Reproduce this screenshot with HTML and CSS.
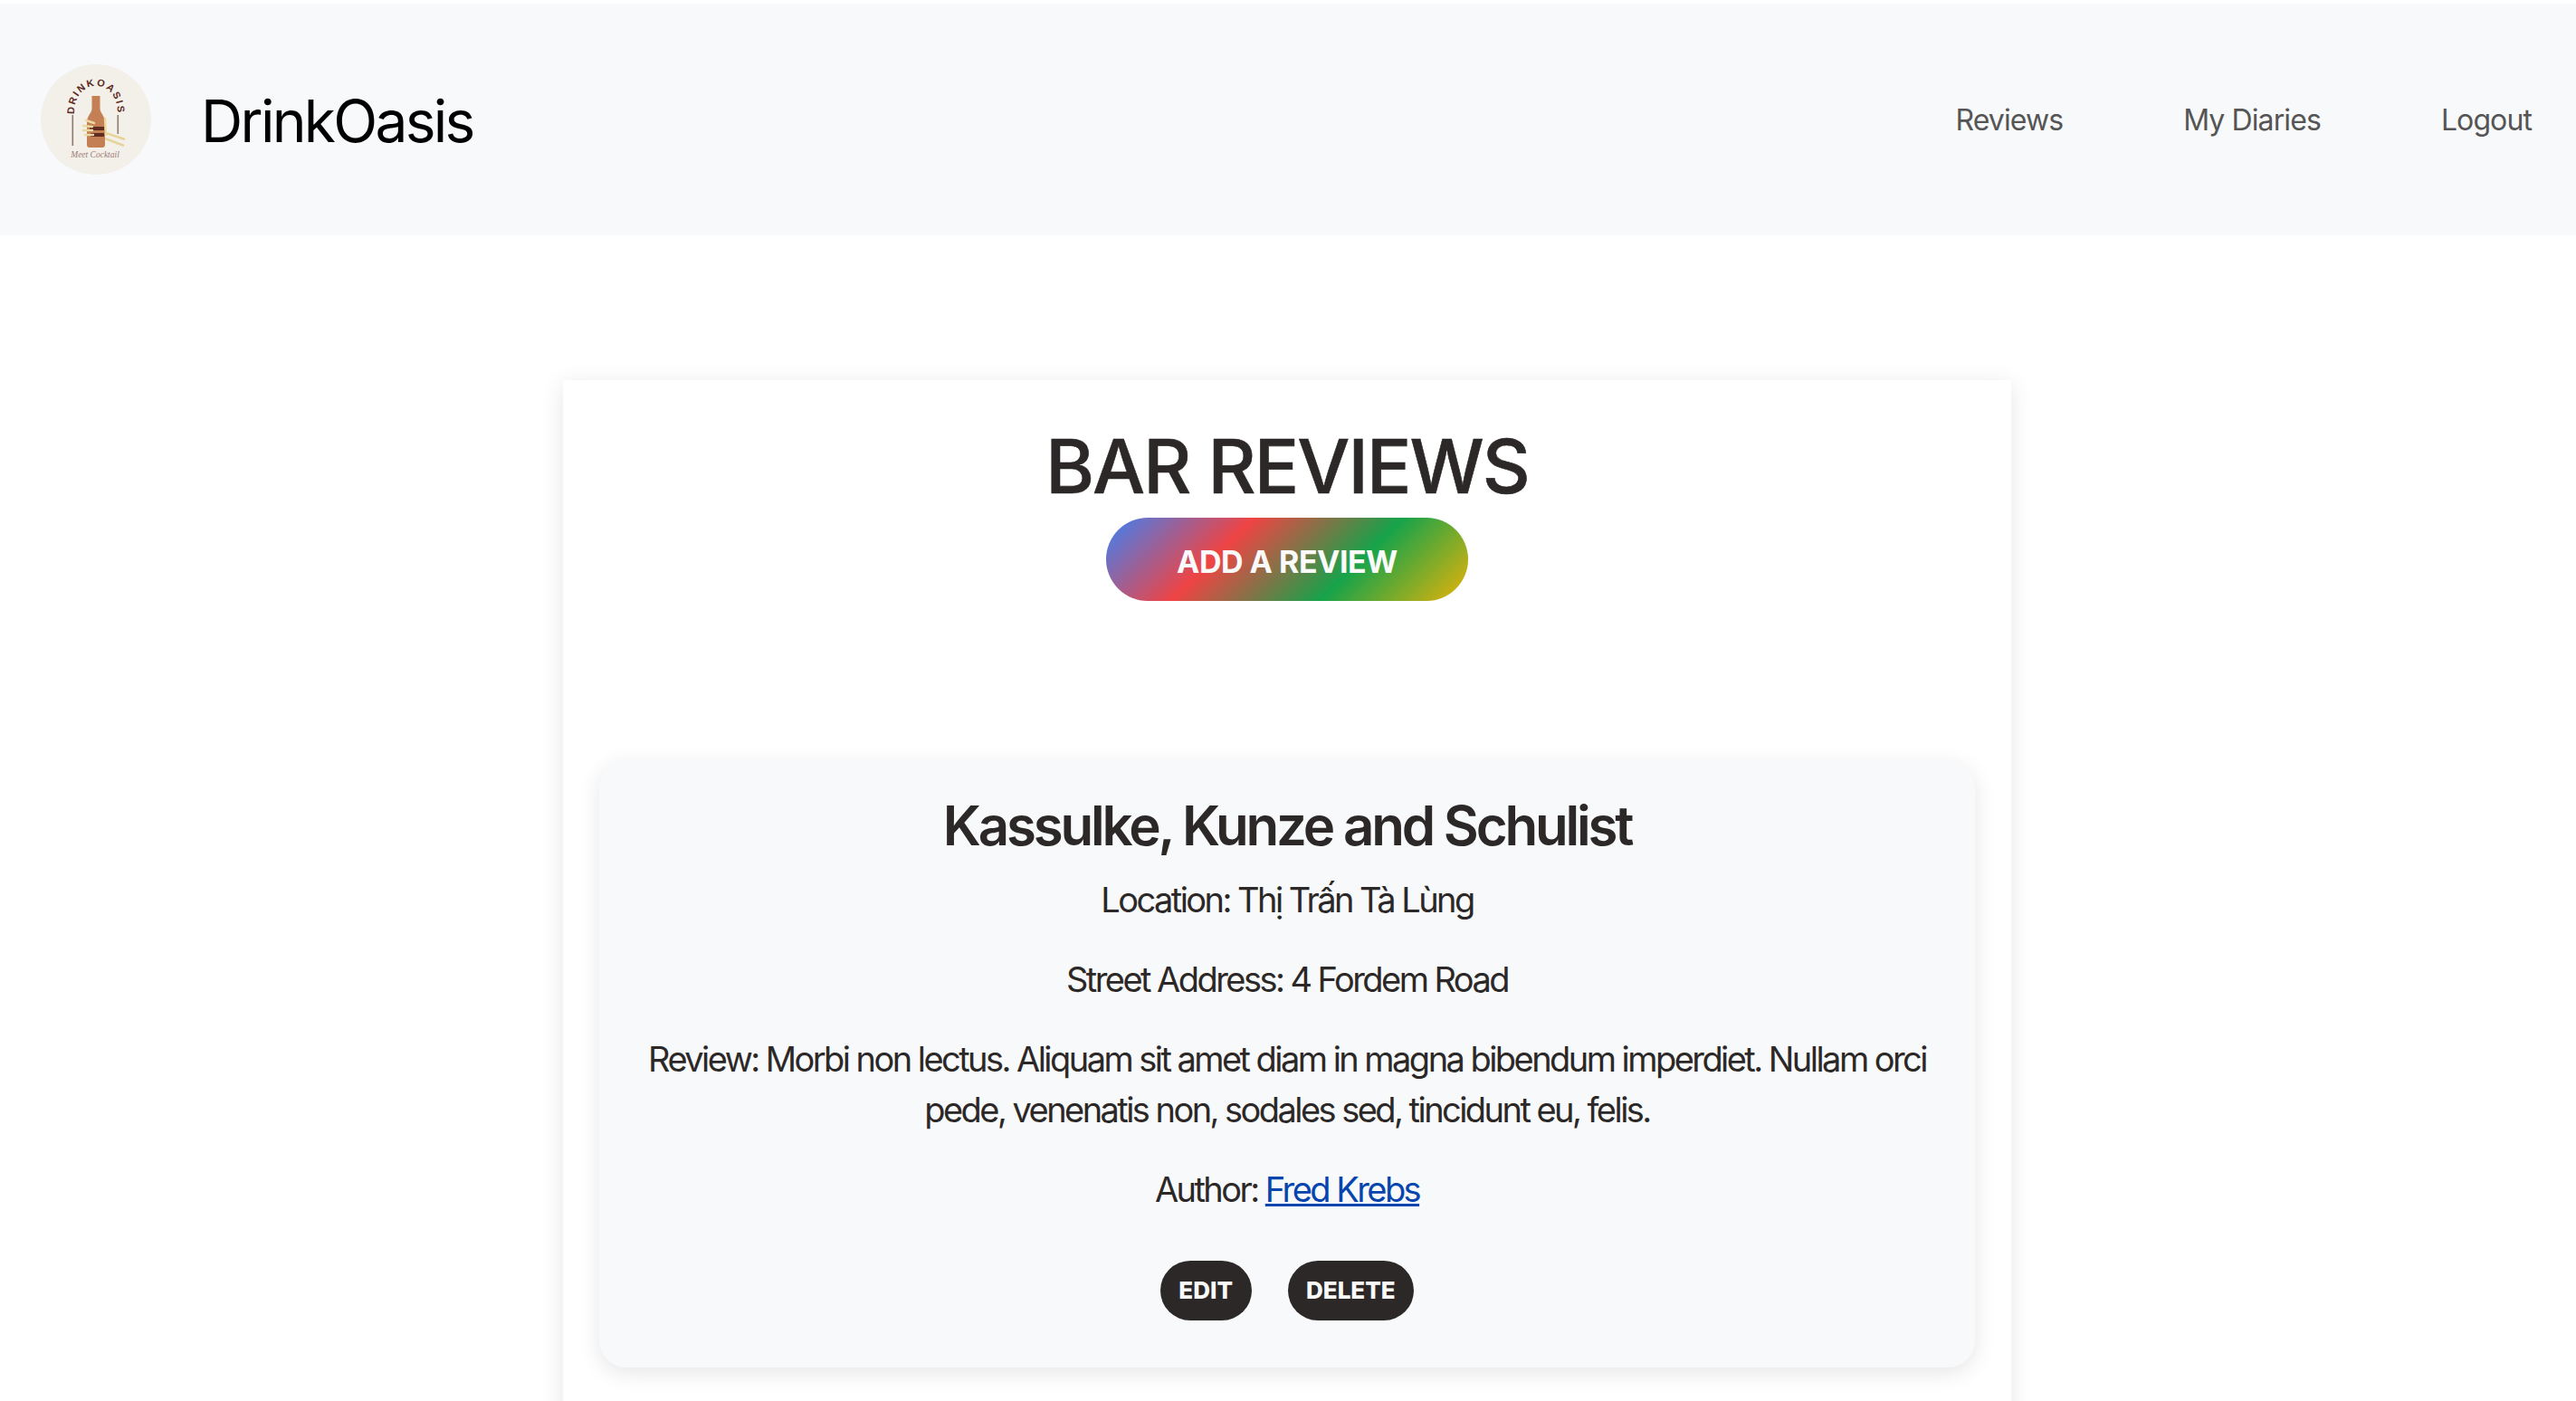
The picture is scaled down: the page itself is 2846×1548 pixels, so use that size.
FILE: index.html
```html
<!DOCTYPE html>
<html lang="en">
<head>
<meta charset="utf-8">
<title>DrinkOasis</title>
<link rel="stylesheet" href="styles.css">
</head>
<body>
<header class="site-header">
  <a class="brand" href="#">
    <svg class="logo" viewBox="0 0 122 122" aria-hidden="true">
      <circle cx="61" cy="61" r="61" fill="#f3f0ea"/>
      <defs><path id="arc" d="M37 54 C37 14 85 14 85 54"/></defs>
      <text class="logo-arc"><textPath href="#arc" startOffset="50%" text-anchor="middle">DRINKOASIS</textPath></text>
      <rect x="34.5" y="56" width="1.6" height="34" fill="#8f7a6c"/>
      <rect x="84.5" y="56" width="1.6" height="21" fill="#8f7a6c"/>
      <path d="M56.5 35h9v14c0 5 5.500 8 5.500 15v25c0 2-1 3-3 3H54c-2 0-3-1-3-3V64c0-7 5.500-10 5.500-15z" fill="#c47f54"/>
      <path d="M54 69h16v4H54zM55 76h15v4H55z" fill="#5f2c22"/>
      <path d="M50 62l9 3M47 68l10 1M47 73l10 0M49 78l9 0M71 60l1 18" stroke="#ecd9a2" stroke-width="2.4" stroke-linecap="round" fill="none"/>
      <path d="M72 76l21 7M71 82l21 8" stroke="#e8d49a" stroke-width="2.6" fill="none"/>
      <text class="logo-tag" x="60" y="103" text-anchor="middle">Meet Cocktail</text>
    </svg>
    <span class="brand-name">DrinkOasis</span>
  </a>
  <nav class="nav">
    <a href="#">Reviews</a>
    <a href="#">My Diaries</a>
    <a href="#">Logout</a>
  </nav>
</header>
<main class="sheet">
  <h1 class="title">BAR REVIEWS</h1>
  <a class="add-btn" href="#">ADD A REVIEW</a>
  <article class="review">
    <h2 class="bar-name">Kassulke, Kunze and Schulist</h2>
    <p>Location: Thị Trấn Tà Lùng</p>
    <p>Street Address: 4 Fordem Road</p>
    <p>Review: Morbi non lectus. Aliquam sit amet diam in magna bibendum imperdiet. Nullam orci pede, venenatis non, sodales sed, tincidunt eu, felis.</p>
    <p>Author: <a class="author" href="#">Fred Krebs</a></p>
    <div class="actions">
      <a class="pill" href="#">EDIT</a>
      <a class="pill" href="#">DELETE</a>
    </div>
  </article>
</main>
</body>
</html>
```
FILE: styles.css
```css
html, body {
  margin: 0;
  height: 1548px;
  overflow: hidden;
  background: #fff;
  font-family: Inter, "Liberation Sans", sans-serif;
  color: #2b2827;
}
a { text-decoration: none; color: inherit; }
.site-header {
  margin-top: 4px;
  height: 256px;
  background: #f8f9fa;
  display: flex;
  align-items: center;
  justify-content: space-between;
  padding: 0 49px 0 45px;
}
.brand { display: flex; align-items: center; gap: 55px; }
.logo { width: 122px; height: 122px; display: block; }
.logo-arc { font: 700 11px "Liberation Sans", sans-serif; letter-spacing: 1.9px; fill: #5c2a22; }
.logo-tag { font: italic 9.5px "Liberation Serif", serif; fill: #a07a75; }
.brand-name { font-size: 64px; line-height: 1; color: #000; letter-spacing: -2.7px; margin-top: 3px; }
.nav { display: flex; gap: 133px; font-size: 32px; letter-spacing: -0.9px; color: #555; }
.sheet {
  width: 1600px;
  height: 1200px;
  margin: 160px 0 0 622px;
  padding-top: 50px;
  box-sizing: border-box;
  background: #fff;
  box-shadow: 0 4px 24px rgba(0, 0, 0, 0.1);
  display: flex;
  flex-direction: column;
  align-items: center;
}
.title { margin: 0; font-size: 82px; line-height: 92px; font-weight: 500; letter-spacing: -1.9px; -webkit-text-stroke: 0.6px #2b2827; }
.add-btn {
  width: 400px;
  height: 92px;
  margin-top: 10px;
  padding-top: 4px;
  box-sizing: border-box;
  border-radius: 46px;
  display: flex;
  align-items: center;
  justify-content: center;
  background: linear-gradient(135deg, #3b82f6, #ef4444, #16a34a, #eab308);
  color: #fafafa;
  font-size: 34px;
  font-weight: 700;
  letter-spacing: -0.5px;
}
.review {
  width: 1520px;
  height: 671px;
  margin-top: 176px;
  box-sizing: border-box;
  padding-top: 36px;
  border-radius: 30px;
  background: #f8f9fa;
  box-shadow: 0 6px 24px rgba(0, 0, 0, 0.1);
  text-align: center;
  font-size: 38px;
  line-height: 56px;
  letter-spacing: -2.55px;
}
.bar-name { margin: 0 0 18px; font-size: 60px; line-height: 72px; font-weight: 600; letter-spacing: -3.2px; }
.review p { margin: 0 auto 32px; width: 1440px; }
.author { color: #0645ad; text-decoration: underline; }
.actions { display: flex; justify-content: center; gap: 40px; margin-top: 51px; }
.pill {
  height: 66px;
  padding: 0 20.5px;
  border-radius: 33px;
  background: #2b2827;
  color: #fafafa;
  font-size: 26px;
  font-weight: 800;
  letter-spacing: 0;
  display: flex;
  align-items: center;
}
```
